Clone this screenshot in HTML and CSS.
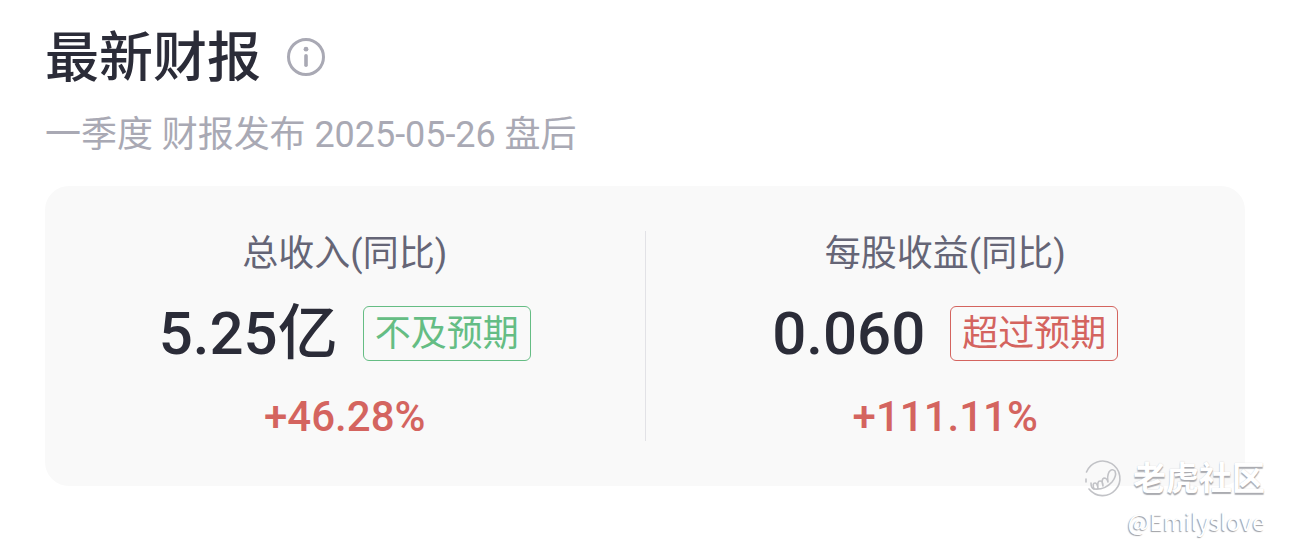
FILE: index.html
```html
<!DOCTYPE html>
<html lang="zh-CN">
<head>
  <meta charset="UTF-8">
  <title>最新财报</title>
  <link rel="stylesheet" href="styles.css">
</head>
<body>

  <div class="title-row">
    <h1>最新财报</h1>
    <svg class="info" viewBox="0 0 40 40" fill="none" stroke="#a9a9b4">
      <circle cx="20" cy="20" r="17.5" stroke-width="3"/>
      <circle cx="20" cy="12.2" r="2.4" fill="#a9a9b4" stroke="none"/>
      <path d="M20 18.8v9.4" stroke-width="3.6" stroke-linecap="round"/>
    </svg>
  </div>
  <p class="subtitle">一季度 财报发布 2025-05-26 盘后</p>

  <div class="card">
    <div class="col">
      <div class="label">总收入(同比)</div>
      <div class="value-row">
        <span class="value">5.25亿</span>
        <span class="tag green">不及预期</span>
      </div>
      <div class="change">+46.28%</div>
    </div>
    <div class="divider"></div>
    <div class="col">
      <div class="label">每股收益(同比)</div>
      <div class="value-row">
        <span class="value">0.060</span>
        <span class="tag red">超过预期</span>
      </div>
      <div class="change">+111.11%</div>
    </div>
  </div>

  <div class="watermark">
    <div class="brand">
      <svg class="logo" viewBox="0 0 40 40" fill="none" stroke-linecap="round" stroke-linejoin="round">
        <g stroke="#c2c3c7" stroke-width="1.6">
          <path d="M3.500 14A17.300 17.300 0 1 1 6 31"/>
          <path d="M3 21v3M8 25q0 5 3 6"/>
          <path d="M11 31q-2-6 1-6q2 0 3 5q-1-7 2-7q3 0 3 5q-2-7 1-8q3 0 4 4q-1-6 1-10q3-4 6-1q2 5-3 11q-7 8-18 7"/>
        </g>
      </svg>
      <span>老虎社区</span>
    </div>
    <div class="author">@Emilyslove</div>
  </div>

</body>
</html>
```

FILE: styles.css
```css
body {
  margin: 0;
  padding: 29px 44px 0 45px;
  height: 523px;
  overflow: hidden;
  background-color: #fff;
  color: #2b2c38;
  font-family: Roboto, "Noto Sans CJK SC", sans-serif;
}
.title-row {
  display: flex;
  align-items: center;
  height: 56px;
}
h1 {
  margin: 4px 0 0;
  font-size: 54px;
  font-weight: 500;
  line-height: 60px;
}
.info {
  width: 40px;
  height: 40px;
  margin-left: 25px;
}
.subtitle {
  margin: 25px 0 0;
  font-size: 36px;
  line-height: 50px;
  letter-spacing: -0.05px;
  color: #a9a9b4;
}
.card {
  display: flex;
  align-items: center;
  height: 300px;
  margin-top: 26px;
  border-radius: 24px;
  background-color: #f9f9f9;
}
.col {
  flex: 1;
  text-align: center;
}
.divider {
  width: 1px;
  height: 210px;
  background-color: #e2e2e6;
}
.label {
  font-size: 36px;
  line-height: 44px;
  color: #656576;
}
.value-row {
  display: flex;
  justify-content: center;
  align-items: center;
  height: 70px;
  margin-top: 22px;
}
.value {
  margin-top: 2px;
  font-size: 60px;
  font-weight: 500;
  line-height: 70px;
}
.tag {
  box-sizing: border-box;
  height: 55px;
  margin-left: 25px;
  padding: 0 11px;
  border: 1px solid;
  border-radius: 6px;
  font-size: 36px;
  line-height: 54px;
}
.green {
  color: #65bd84;
}
.red {
  color: #d4645f;
}
.change {
  margin-top: 24px;
  margin-bottom: -2px;
  font-size: 42px;
  font-weight: 500;
  line-height: 50px;
  color: #d4645f;
}
/* sits over the corner of the card */
.watermark {
  position: absolute;
  right: 24px;
  top: 455px;
  text-align: right;
  color: #fff;
}
.brand {
  display: flex;
  align-items: center;
  justify-content: flex-end;
  height: 46px;
  font-size: 33px;
  font-weight: 700;
  text-shadow: 0 2px 1px #aaabb0, 0 0 1px #c8c8cc;
}
.brand span {
  margin-top: -5px;
}
.logo {
  width: 40px;
  height: 40px;
  margin-right: 10px;
}
.author {
  font-family: "Noto Sans CJK SC", sans-serif;
  font-size: 23px;
  line-height: 40px;
  text-shadow: -1px 1px 1px #9d9ea3;
}
```
